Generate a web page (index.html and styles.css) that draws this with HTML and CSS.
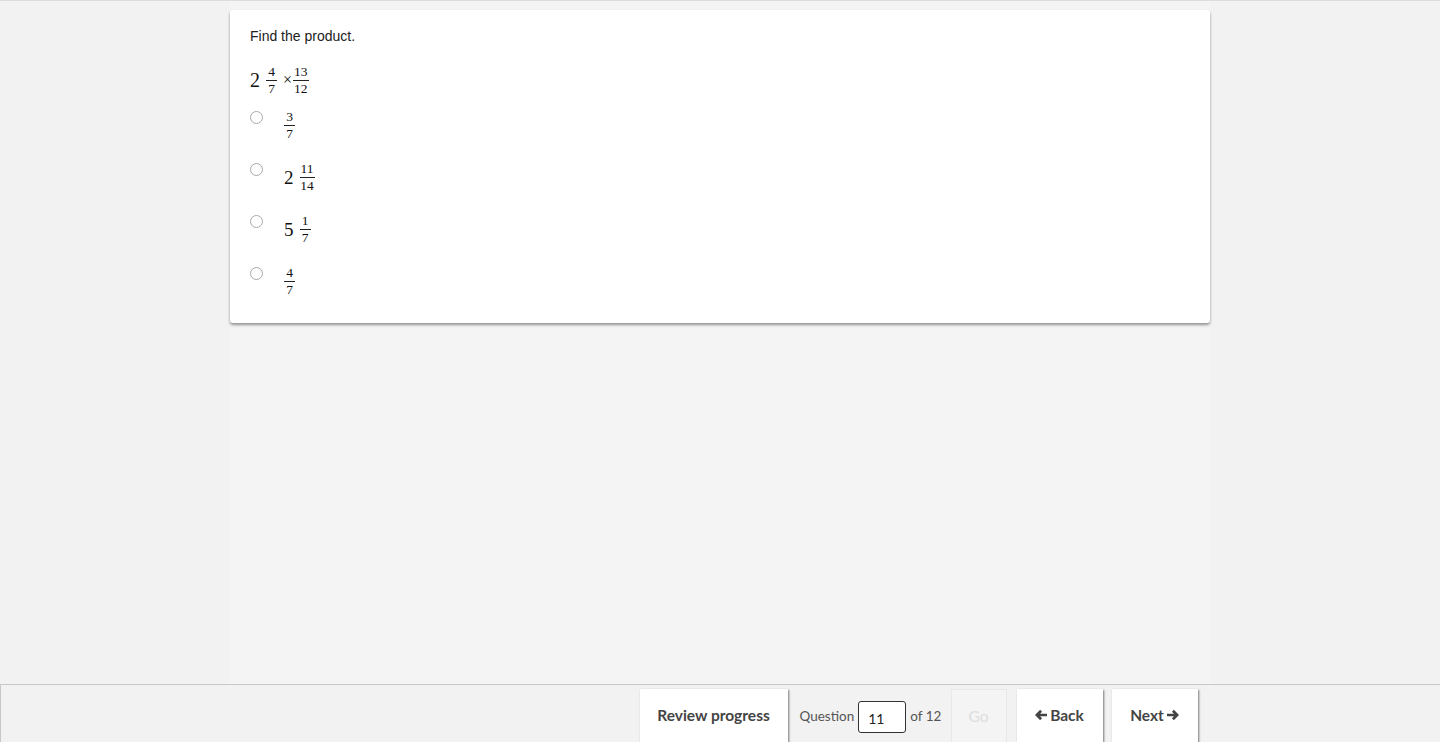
FILE: index.html
```html
<!DOCTYPE html>
<html lang="en">
<head>
  <meta charset="UTF-8">
  <title>Find the product</title>
  <link rel="stylesheet" href="styles.css">
</head>
<body>
  <div class="page">
    <div class="column">
      <div class="card">
        <p class="prompt">Find the product.</p>
        <div class="expr">
          <span class="whole">2</span>
          <span class="frac"><span class="num">4</span><span class="den">7</span></span>
          <span class="times">×</span>
          <span class="frac"><span class="num">13</span><span class="den">12</span></span>
        </div>

        <div class="option">
          <span class="radio"></span>
          <span class="math">
            <span class="frac"><span class="num">3</span><span class="den">7</span></span>
          </span>
        </div>
        <div class="option">
          <span class="radio"></span>
          <span class="math">
            <span class="whole">2</span>
            <span class="frac"><span class="num">11</span><span class="den">14</span></span>
          </span>
        </div>
        <div class="option">
          <span class="radio"></span>
          <span class="math">
            <span class="whole">5</span>
            <span class="frac"><span class="num">1</span><span class="den">7</span></span>
          </span>
        </div>
        <div class="option">
          <span class="radio"></span>
          <span class="math">
            <span class="frac"><span class="num">4</span><span class="den">7</span></span>
          </span>
        </div>
      </div>
    </div>
  </div>

  <div class="footer">
    <div class="footer-inner">
      <button class="btn btn-review">Review progress</button>
      <div class="jump">
        <span>Question</span>
        <input class="jump-input" type="text" value="11">
        <span>of 12</span>
      </div>
      <button class="btn btn-go" disabled>Go</button>
      <button class="btn btn-nav btn-back">
        <svg class="arrow" viewBox="0 0 14 14"><path d="M0 7L6 1L8.2 3.2L5.9 5.4H14V8.6H5.9L8.2 10.8L6 13Z"/></svg>Back
      </button>
      <button class="btn btn-nav btn-next">
        Next<svg class="arrow" viewBox="0 0 14 14"><path d="M14 7L8 1L5.8 3.2L8.1 5.4H0V8.6H8.1L5.8 10.8L8 13Z"/></svg>
      </button>
    </div>
  </div>
</body>
</html>
```

FILE: styles.css
```css
html, body {
  height: 100%;
}

body {
  margin: 0;
  display: flex;
  flex-direction: column;
  background-color: #f2f2f2;
  font-family: "Liberation Sans", Arial, sans-serif;
  border-top: 1px solid #dcdcdc;
  box-sizing: border-box;
}

.page {
  flex: 1;
  overflow: hidden;
}

.column {
  width: 980px;
  height: 100%;
  margin: 0 auto;
  padding-top: 9px;
  box-sizing: border-box;
  background-color: #f4f4f4;
}

.card {
  background: #fff;
  border-radius: 3px;
  box-shadow: 0 2px 3px rgba(0, 0, 0, 0.4);
  padding: 18px 20px 26px;
}

.prompt {
  margin: 0;
  font-size: 14px;
  line-height: 16px;
  color: #222;
}

/* math */
.expr,
.math {
  display: flex;
  align-items: center;
  font-family: "Liberation Serif", "Times New Roman", serif;
  color: #111;
}

.expr {
  margin-top: 20px;
  height: 32px;
  margin-bottom: 8px;
}

.whole {
  font-size: 20px;
  margin-right: 6px;
}

.frac {
  display: inline-flex;
  flex-direction: column;
  align-items: center;
  font-size: 13.5px;
  line-height: 14px;
}

.num {
  border-bottom: 1px solid #222;
  padding: 0 1px 1px;
  min-width: 9px;
  text-align: center;
  align-self: stretch;
}

.den {
  padding-top: 1px;
}

.times {
  font-size: 16px;
  margin: 0 1px 0 6px;
}

.option {
  display: flex;
  align-items: flex-start;
  height: 52px;
}

.option:last-child {
  height: auto;
}

.radio {
  width: 13px;
  height: 13px;
  border: 1px solid #a8a8a8;
  border-radius: 50%;
  box-sizing: border-box;
  margin-top: 7px;
  margin-right: 21px;
  background: #fff;
}

.option .math {
  margin-top: 6px;
}

.option .whole {
  font-size: 19px;
}

/* footer */
.footer {
  height: 58px;
  flex-shrink: 0;
  border-top: 1px solid #c8c8c8;
  border-left: 1px solid #c8c8c8;
  box-sizing: border-box;
  background-color: #f2f2f2;
  overflow: hidden;
}

.footer-inner {
  width: 980px;
  margin: 0 auto;
  padding: 4px 13px 0 0;
  box-sizing: border-box;
  display: flex;
  justify-content: flex-end;
  align-items: flex-start;
}

.btn {
  height: 60px;
  border: none;
  background: #fff;
  box-shadow: 1px 1px 2px rgba(0, 0, 0, 0.5);
  font-family: Lato, "Liberation Sans", sans-serif;
  font-weight: bold;
  font-size: 15.5px;
  line-height: 20px;
  color: #444;
  padding: 16px 0 0;
  display: flex;
  justify-content: center;
  align-items: flex-start;
  gap: 3px;
}

.btn-review {
  width: 148px;
}

.jump {
  width: 160px;
  height: 53px;
  display: flex;
  align-items: center;
  gap: 4px;
  padding-left: 12px;
  box-sizing: border-box;
  font-family: Lato, "Liberation Sans", sans-serif;
  font-size: 13.5px;
  color: #555;
}

.jump-input {
  width: 48px;
  height: 32px;
  margin-top: 3px;
  border: 1px solid #333;
  border-radius: 3px;
  box-sizing: border-box;
  padding: 3px 0 0 9px;
  font-family: Lato, "Liberation Sans", sans-serif;
  font-size: 14px;
  color: #222;
  background: #fff;
}

.btn-go {
  width: 56px;
  margin-left: 3px;
  background: #f4f4f4;
  box-shadow: none;
  border: 1px solid #e8e8e8;
  color: #ddd;
  font-weight: normal;
}

.btn-back {
  width: 86px;
  margin-left: 10px;
}

.btn-next {
  width: 86px;
  margin-left: 9px;
}

.arrow {
  width: 12px;
  height: 12px;
  margin-top: 4px;
  fill: #444;
}
```
